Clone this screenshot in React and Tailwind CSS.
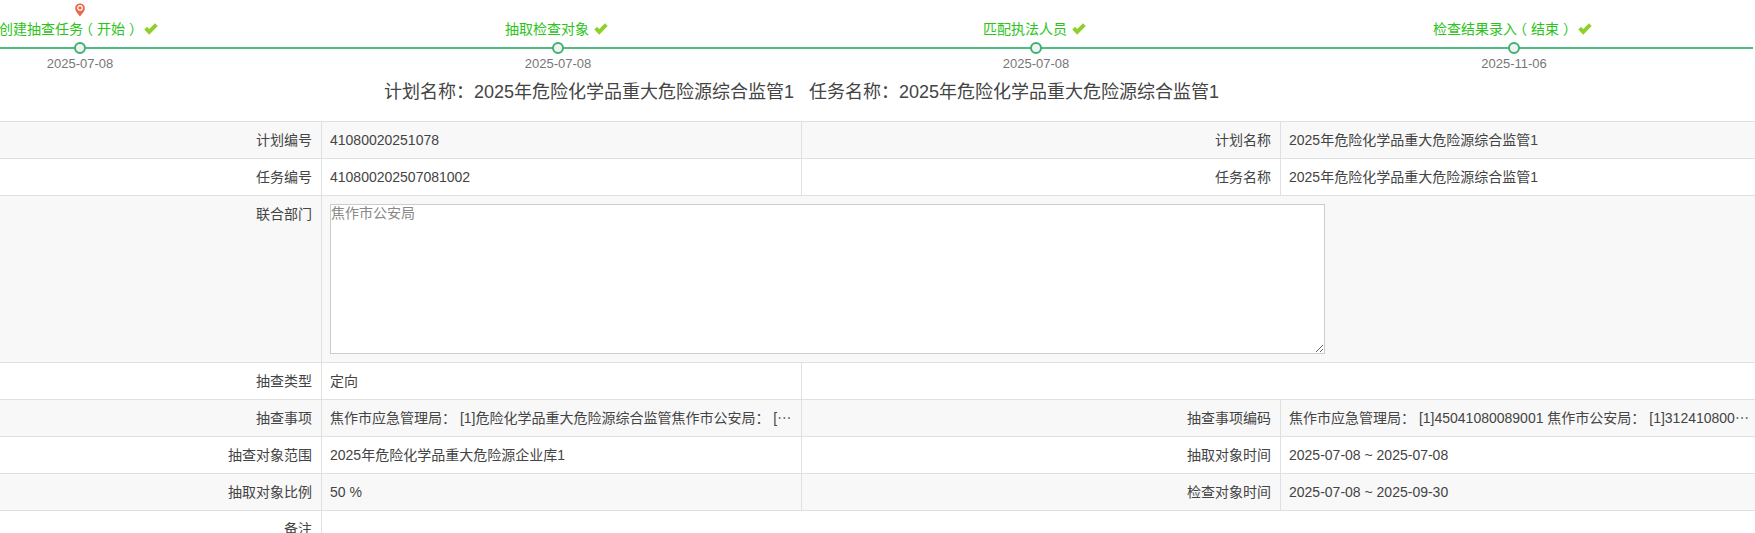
const font = { fontFamily: '"Liberation Sans", "Noto Sans CJK SC", sans-serif' };

function Step({ label, date, pin }) {
  return (
    <div className="relative w-[478px] shrink-0 h-[70px]">
      {pin && (
        <svg className="absolute left-[233px] top-[3px]" width="12" height="14" viewBox="0 0 12 15">
          <path d="M6 0.5C2.8 0.5 0.8 2.8 0.8 5.5 0.8 8.6 3.8 11.5 6 14.5 8.2 11.5 11.2 8.6 11.2 5.5 11.2 2.8 9.2 0.5 6 0.5Z" fill="#e9694a" />
          <circle cx="6" cy="5.3" r="2.4" fill="none" stroke="#fff" strokeWidth="1.3" />
        </svg>
      )}
      <div className="absolute left-0 right-0 top-[20px] h-[18px] flex items-center justify-center pr-[3px] text-[14px] leading-[18px] text-[#2cc31a] whitespace-nowrap">
        <span>{label}</span>
        <svg className="ml-[5px]" width="14" height="12" viewBox="0 0 14 12">
          <path d="M0.3 6.5L3 3.8 5.2 6 11 0.3 13.7 3 5.2 11.7Z" fill="#8fd129" />
        </svg>
      </div>
      <div className="absolute left-[233px] top-[42px] w-[12px] h-[12px] rounded-full bg-[#f2f2f2] border-2 border-[#3cb371]" />
      <div className="absolute left-0 right-0 top-[55px] text-center text-[13px] leading-[17px] text-[#777777]">{date}</div>
    </div>
  );
}

function Pull({ children }) {
  return <span className="tracking-[-4px]">{children}</span>;
}
function Push({ children }) {
  return <span className="tracking-[4px]">{children}</span>;
}

function Label({ children, bg, tall, h }) {
  return (
    <div className={`${bg} ${h} ${tall ? "pt-[8px]" : "flex items-center justify-end"} text-right pr-[9px] text-[14px] leading-[20px] text-[#444444] border-b border-r border-[#e0e0e0]`}>
      {children}
    </div>
  );
}

function Value({ children, bg, last }) {
  return (
    <div className={`${bg} h-[37px] flex items-center pl-[8px] text-[14px] text-[#444444] border-b ${last ? "" : "border-r"} border-[#e0e0e0] min-w-0 overflow-hidden`}>
      <span className="whitespace-nowrap">{children}</span>
    </div>
  );
}

function Row({ bg, a, b, c, d }) {
  return (
    <>
      <Label bg={bg} h="h-[37px]">{a}</Label>
      <Value bg={bg}>{b}</Value>
      <Label bg={bg} h="h-[37px]">{c}</Label>
      <Value bg={bg} last>{d}</Value>
    </>
  );
}

export default function App() {
  const plan = "2025年危险化学品重大危险源综合监管1";
  return (
    <div className="w-[1755px] h-[533px] overflow-hidden bg-white" style={font}>
      <div className="relative h-[79px] overflow-hidden">
        <div className="absolute left-0 top-[47px] w-[1753px] h-[2px] bg-[#52bd83]" />
        <div className="relative flex ml-[-159px]">
          <Step pin label={<>创建抽查任<Pull>务</Pull><Push>（</Push>开<Push>始</Push><Pull>）</Pull></>} date="2025-07-08" />
          <Step label="抽取检查对象" date="2025-07-08" />
          <Step label="匹配执法人员" date="2025-07-08" />
          <Step label={<>检查结果录<Pull>入</Pull><Push>（</Push>结<Push>束</Push><Pull>）</Pull></>} date="2025-11-06" />
        </div>
      </div>
      <div className="h-[42px] w-[1603px] flex justify-center gap-[15px] text-[18px] leading-[24px] pt-[1px] text-[#444444]">
        <span>计划名称：{plan}</span>
        <span>任务名称：{plan}</span>
      </div>
      <div className="grid grid-cols-[322px_480px_479px_474px] border-t border-[#e0e0e0]">
        <Row bg="bg-[#f8f8f8]" a="计划编号" b="41080020251078" c="计划名称" d={plan} />
        <Row bg="bg-white" a="任务编号" b="410800202507081002" c="任务名称" d={plan} />
        <Label bg="bg-[#f8f8f8]" h="h-[167px]" tall>联合部门</Label>
        <div className="col-span-3 h-[167px] bg-[#f8f8f8] border-b border-[#e0e0e0] pl-[8px] pt-[8px]">
          <textarea
            readOnly
            value="焦作市公安局"
            className="block w-[995px] h-[150px] bg-white border border-[#cccccc] px-0 py-[1px] text-[14px] leading-[15px] text-[#888888] resize-y outline-none"
          />
        </div>
        <Label bg="bg-white" h="h-[37px]">抽查类型</Label>
        <Value bg="bg-white">定向</Value>
        <div className="col-span-2 h-[37px] bg-white border-b border-[#e0e0e0]" />
        <Row bg="bg-[#f8f8f8]" a="抽查事项" b="焦作市应急管理局： [1]危险化学品重大危险源综合监管焦作市公安局： [⋯" c="抽查事项编码" d="焦作市应急管理局： [1]45041080089001 焦作市公安局： [1]312410800⋯" />
        <Row bg="bg-white" a="抽查对象范围" b="2025年危险化学品重大危险源企业库1" c="抽取对象时间" d="2025-07-08 ~ 2025-07-08" />
        <Row bg="bg-[#f8f8f8]" a="抽取对象比例" b="50 %" c="检查对象时间" d="2025-07-08 ~ 2025-09-30" />
        <Label bg="bg-white" h="h-[37px]" tall>备注</Label>
        <div className="col-span-3 h-[37px] bg-white" />
      </div>
    </div>
  );
}
